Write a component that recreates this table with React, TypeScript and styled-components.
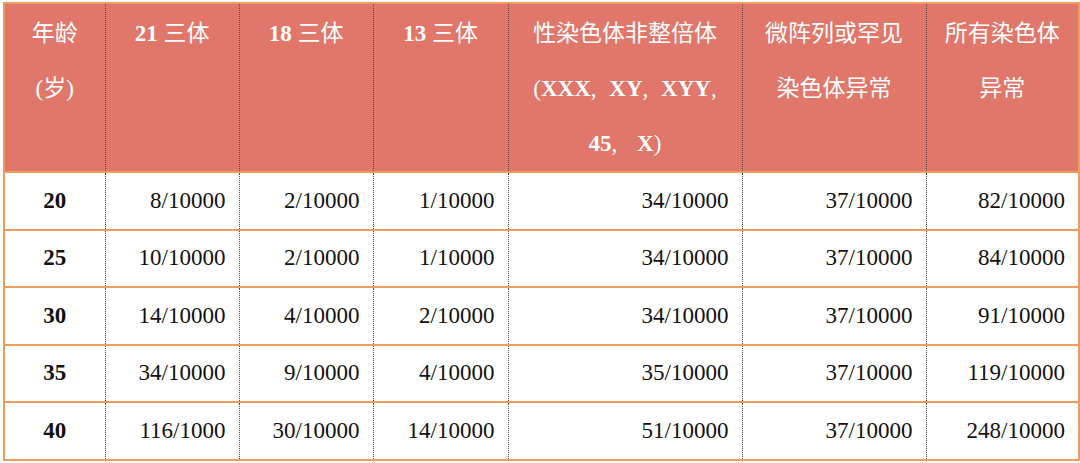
import styled, { createGlobalStyle } from 'styled-components';

const GlobalStyle = createGlobalStyle`
  html, body {
    margin: 0;
    padding: 0;
    background: #ffffff;
  }
`;

const ORANGE = '#f19c5f';
const HEADER_BG = '#e0776a';

const Page = styled.div`
  padding: 2px 1px 0 3px;
  font-family: "Liberation Serif", "Noto Sans CJK SC", serif;
`;

const Table = styled.table`
  width: 1075px;
  border-collapse: collapse;
  table-layout: fixed;
  border: 2px solid ${ORANGE};
  font-size: 23px;
`;

const HeadRow = styled.tr`
  background: ${HEADER_BG};
  border-bottom: 2px solid ${ORANGE};
`;

const HeadCell = styled.th`
  height: 164px;
  padding: 2px 0 0;
  vertical-align: top;
  text-align: center;
  color: #ffffff;
  font-weight: 400;
  line-height: 55px;
  border-left: 1px dotted #4a4a4a;
  &:first-child {
    border-left: none;
  }
`;

const B = styled.b`
  font-weight: 700;
`;

const Spaced = styled.span<{ $gap: number }>`
  word-spacing: ${(p) => p.$gap}px;
`;

const BodyRow = styled.tr`
  border-top: 2px solid ${ORANGE};
  height: 57.5px;
`;

const Cell = styled.td<{ $label?: boolean }>`
  padding: 0 ${(p) => (p.$label ? '0' : '13px')} 0 0;
  text-align: ${(p) => (p.$label ? 'center' : 'right')};
  font-weight: ${(p) => (p.$label ? 700 : 400)};
  color: #111111;
  vertical-align: middle;
  border-left: 1px dotted #4a4a4a;
  &:first-child {
    border-left: none;
  }
`;

const widths = [101, 134, 134, 135, 234, 184, 153];

const rows = [
  ['20', '8/10000', '2/10000', '1/10000', '34/10000', '37/10000', '82/10000'],
  ['25', '10/10000', '2/10000', '1/10000', '34/10000', '37/10000', '84/10000'],
  ['30', '14/10000', '4/10000', '2/10000', '34/10000', '37/10000', '91/10000'],
  ['35', '34/10000', '9/10000', '4/10000', '35/10000', '37/10000', '119/10000'],
  ['40', '116/1000', '30/10000', '14/10000', '51/10000', '37/10000', '248/10000'],
];

export default function App() {
  return (
    <>
      <GlobalStyle />
      <Page>
        <Table>
          <colgroup>
            {widths.map((w, i) => (
              <col key={i} style={{ width: w }} />
            ))}
          </colgroup>
          <thead>
            <HeadRow>
              <HeadCell>
                年龄
                <br />
                (岁)
              </HeadCell>
              <HeadCell>
                <B>21</B> 三体
              </HeadCell>
              <HeadCell>
                <B>18</B> 三体
              </HeadCell>
              <HeadCell>
                <B>13</B> 三体
              </HeadCell>
              <HeadCell>
                性染色体非整倍体
                <br />
                <Spaced $gap={7}>
                  (<B>XXX</B>, <B>XY</B>, <B>XYY</B>,
                </Spaced>
                <br />
                <Spaced $gap={14}>
                  <B>45</B>, <B>X</B>)
                </Spaced>
              </HeadCell>
              <HeadCell>
                微阵列或罕见
                <br />
                染色体异常
              </HeadCell>
              <HeadCell>
                所有染色体
                <br />
                异常
              </HeadCell>
            </HeadRow>
          </thead>
          <tbody>
            {rows.map((r) => (
              <BodyRow key={r[0]}>
                {r.map((v, i) => (
                  <Cell key={i} $label={i === 0}>
                    {v}
                  </Cell>
                ))}
              </BodyRow>
            ))}
          </tbody>
        </Table>
      </Page>
    </>
  );
}
